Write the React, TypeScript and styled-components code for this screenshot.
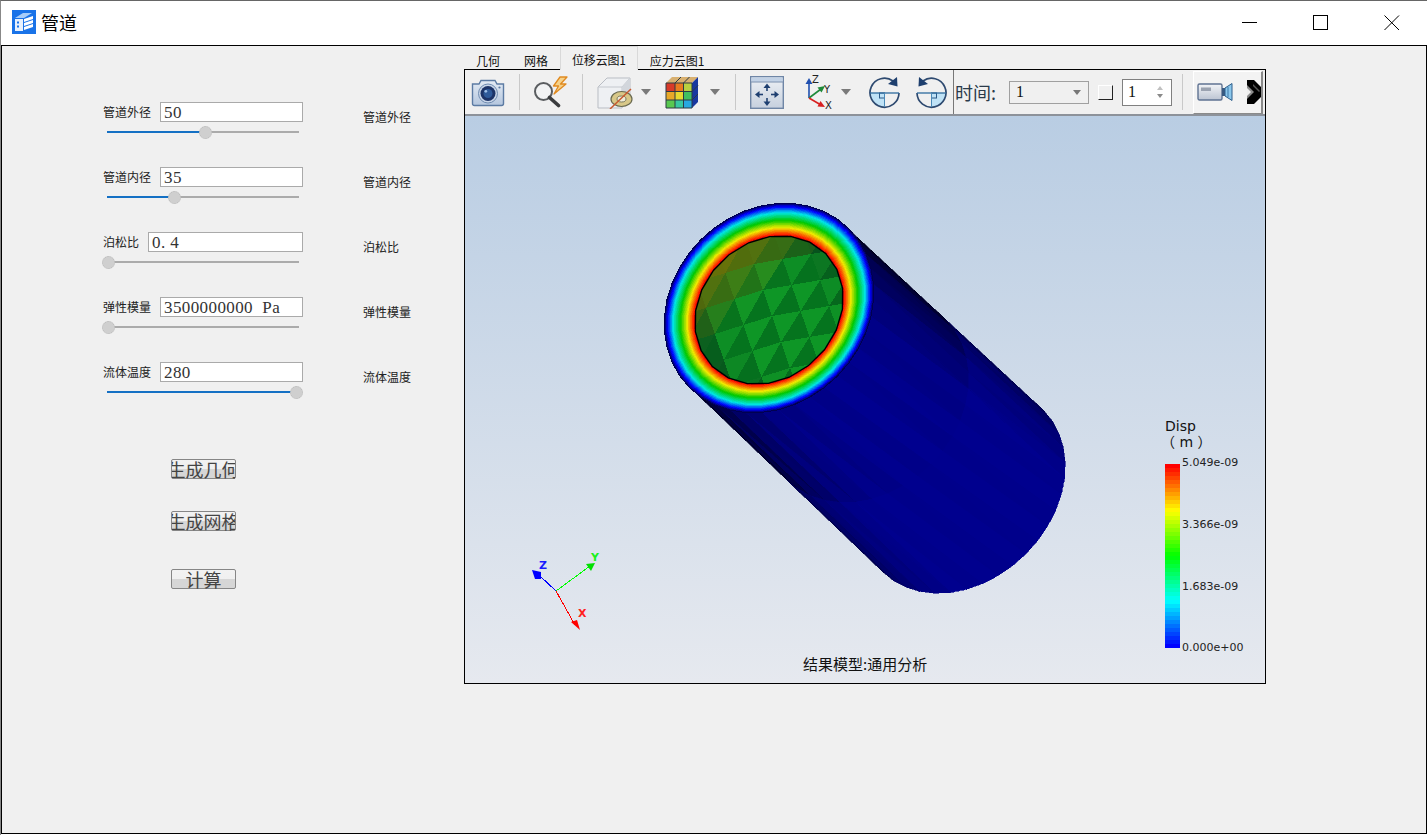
import React from "react";
import styled, {createGlobalStyle} from "styled-components";

const CJK = `"Noto Sans CJK SC", "Liberation Sans", sans-serif`;
const SERIF = `"Liberation Serif", "Noto Sans CJK SC", serif`;

const GlobalStyle = createGlobalStyle`
  html, body {
    margin: 0;
    padding: 0;
    background: #f0f0f0;
    overflow: hidden;
  }
`

interface IField {
    label: string
    value: string
    ratio: number
}

const fields: Array<IField> = [
    {label: "管道外径", value: "50", ratio: 0.516},
    {label: "管道内径", value: "35", ratio: 0.351},
    {label: "泊松比", value: "0. 4", ratio: 0},
    {label: "弹性模量", value: "3500000000  Pa", ratio: 0},
    {label: "流体温度", value: "280", ratio: 1},
];

const tabs = ["几何", "网格", "位移云图1", "应力云图1"];

// ---- colour helpers for the contour plot ----
type RGB = [number, number, number];

const mix = (a: RGB, b: RGB, t: number): RGB => [
    a[0] + (b[0] - a[0]) * t,
    a[1] + (b[1] - a[1]) * t,
    a[2] + (b[2] - a[2]) * t,
];

const css = (c: RGB) => `rgb(${Math.round(c[0])},${Math.round(c[1])},${Math.round(c[2])})`;

const ramp = (t: number, stops: Array<[number, RGB]>): string => {
    for (let i = 1; i < stops.length; i++) {
        if (t <= stops[i][0]) {
            const k = (t - stops[i - 1][0]) / (stops[i][0] - stops[i - 1][0]);
            return css(mix(stops[i - 1][1], stops[i][1], k));
        }
    }
    return css(stops[stops.length - 1][1]);
};

const ringStops: Array<[number, RGB]> = [
    [0, [0, 0, 130]],
    [0.08, [0, 0, 255]],
    [0.26, [0, 230, 230]],
    [0.5, [0, 200, 0]],
    [0.73, [240, 235, 0]],
    [0.95, [255, 20, 0]],
    [1, [170, 0, 0]],
];

const legendStops: Array<[number, RGB]> = [
    [0, [0, 0, 255]],
    [0.25, [0, 255, 255]],
    [0.5, [0, 255, 0]],
    [0.75, [255, 255, 0]],
    [1, [255, 0, 0]],
];

const U = Math.SQRT1_2;
const ellipsePoint = (cx: number, cy: number, a: number, b: number, t: number): [number, number] => [
    cx + a * Math.cos(t) * U + b * Math.sin(t) * U,
    cy - a * Math.cos(t) * U + b * Math.sin(t) * U,
];

const ellipsePoly = (cx: number, cy: number, a: number, b: number, n = 40): string => {
    const pts: Array<string> = [];
    for (let i = 0; i < n; i++) {
        const p = ellipsePoint(cx, cy, a, b, (i / n) * Math.PI * 2);
        pts.push(`${p[0].toFixed(1)},${p[1].toFixed(1)}`);
    }
    return pts.join(" ");
};

const BodyFacets: React.FC = () => {
    const items = [];
    const n = 20;
    for (let i = 0; i < n; i++) {
        const t0 = (i / n) * Math.PI;
        const t1 = ((i + 1) / n) * Math.PI;
        const tm = (t0 + t1) / 2;
        const a0 = ellipsePoint(769, 308, 112, 95, t0);
        const a1 = ellipsePoint(769, 308, 112, 95, t1);
        const b0 = ellipsePoint(963, 491, 114, 89, t0);
        const b1 = ellipsePoint(963, 491, 114, 89, t1);
        const c0 = [(a0[0] + b0[0]) / 2, (a0[1] + b0[1]) / 2];
        const c1 = [(a1[0] + b1[0]) / 2, (a1[1] + b1[1]) / 2];
        const base = Math.sin(tm);
        const lit = 62 + 78 * Math.min(1, Math.pow(base, 0.6) * 1.2);
        const shade = (d: number) => `rgb(0,0,${Math.round(Math.max(0, Math.min(143, lit + d)))})`;
        const odd = i % 2 === 0 ? 4 : -3;
        const near = -58 * (1 - base);
        const tris = [
            [a0, a1, c0, near + odd],
            [a1, c0, c1, near * 0.6 - odd],
            [c0, c1, b0, -odd / 2],
            [c1, b0, b1, odd / 2],
        ] as Array<[number[], number[], number[], number]>;
        tris.forEach((tri, k) => {
            const pts = `${tri[0][0]},${tri[0][1]} ${tri[1][0]},${tri[1][1]} ${tri[2][0]},${tri[2][1]}`;
            items.push(<polygon key={`${i}-${k}`} points={pts} fill={shade(tri[3])} stroke={shade(tri[3])} strokeWidth={0.6}/>);
        });
    }
    return <g>{items}</g>;
};

const BoreFacets: React.FC = () => {
    const items = [];
    const step = 26;
    const cx = 772;
    const cy = 316;
    const project = (i: number, j: number): [number, number] => {
        // rows fan out a little, like the inside of a tube seen at an angle
        const px = i * step * 1.1 + j * 9;
        const py = j * step - i * 7 + Math.abs(i) * 2;
        return [cx + px, cy + py];
    };
    const colour = (x: number, y: number, dark: boolean): string => {
        const d = Math.hypot(x - 785, y - 325) / 88;
        const upper = (790 - (x * 0.72 + y * 0.82)) / 70;
        let c: RGB = dark ? [5, 116, 30] : [14, 150, 38];
        c = mix(c, [8, 70, 28], Math.max(0, Math.min(0.85, (d - 0.62) * 1.7)));
        c = mix(c, [125, 118, 4], Math.max(0, Math.min(0.8, upper)));
        return css(c);
    };
    for (let i = -6; i < 6; i++) {
        for (let j = -6; j < 6; j++) {
            const a = project(i, j);
            const b = project(i + 1, j);
            const c = project(i, j + 1);
            const d = project(i + 1, j + 1);
            items.push(<polygon key={`a${i}${j}`} points={`${a} ${b} ${c}`} fill={colour((a[0] + b[0] + c[0]) / 3, (a[1] + b[1] + c[1]) / 3, false)}/>);
            items.push(<polygon key={`b${i}${j}`} points={`${b} ${c} ${d}`} fill={colour((b[0] + c[0] + d[0]) / 3, (b[1] + c[1] + d[1]) / 3, true)}/>);
        }
    }
    return <g>{items}</g>;
};

const Ring: React.FC = () => {
    const items = [];
    const n = 46;
    for (let i = 0; i < n; i++) {
        const t = i / (n - 1);
        items.push(
            <polygon
                key={i}
                points={ellipsePoly(769, 308 + t * 2, 112 - t * 32, 96 - t * 28)}
                fill={ramp(t, ringStops)}
            />
        );
    }
    return <g>{items}</g>;
};

const LegendBar: React.FC = () => {
    const items = [];
    const n = 46;
    for (let i = 0; i < n; i++) {
        items.push(
            <rect key={i} x={1165} y={464 + i * 4} width={15} height={4} fill={ramp(1 - i / (n - 1), legendStops)}/>
        );
    }
    return <g shapeRendering="crispEdges">{items}</g>;
};

const Scene: React.FC = () => (
    <SceneSvg viewBox="465 116 800 567">
        <defs>
            <clipPath id="bore">
                <polygon points={ellipsePoly(769, 310, 80, 68, 22)}/>
            </clipPath>
        </defs>
        <g shapeRendering="crispEdges">
            <BodyFacets/>
            <polygon points={ellipsePoly(769, 308, 113, 97)} fill="#000050"/>
            <Ring/>
            <g clipPath="url(#bore)">
                <rect x={680} y={230} width={180} height={160} fill="#0a8a20"/>
                <BoreFacets/>
            </g>
        </g>
        <polygon points={ellipsePoly(769, 310, 80, 68, 22)} fill="none" stroke="#000" strokeWidth={1.3}/>

        <g strokeWidth={1} shapeRendering="crispEdges">
            <line x1={556} y1={591} x2={540} y2={576} stroke="#0000ff"/>
            <line x1={556} y1={591} x2={590} y2={566} stroke="#00ff00"/>
            <line x1={556} y1={591} x2={575} y2={625} stroke="#ff0000"/>
        </g>
        <polygon points="532,570 541,572 541,579 535,579" fill="#0000ff"/>
        <polygon points="586,564 595,563 591,571" fill="#00e000"/>
        <polygon points="571,622 577,620 580,630" fill="#ff0000"/>
        <AxisLabel x={539} y={569} fill="#1a1aff">Z</AxisLabel>
        <AxisLabel x={591} y={561} fill="#1cf01c">Y</AxisLabel>
        <AxisLabel x={578} y={617} fill="#ff2020">X</AxisLabel>

        <LegendTitle x={1165} y={431}>Disp</LegendTitle>
        <LegendTitle x={1161} y={447}>（ m ）</LegendTitle>
        <LegendBar/>
        <LegendText x={1182} y={466}>5.049e-09</LegendText>
        <LegendText x={1182} y={528}>3.366e-09</LegendText>
        <LegendText x={1182} y={590}>1.683e-09</LegendText>
        <LegendText x={1182} y={651}>0.000e+00</LegendText>
        <ModelText x={803} y={670}>结果模型:通用分析</ModelText>
    </SceneSvg>
);

// ---- toolbar icons ----
const CameraIcon = () => (
    <svg width="34" height="30" viewBox="0 0 34 30">
        <defs>
            <linearGradient id="camBody" x1="0" y1="0" x2="0" y2="1">
                <stop offset="0" stopColor="#e4ebf4"/>
                <stop offset="1" stopColor="#b4c6de"/>
            </linearGradient>
        </defs>
        <path d="M1.5 7 H8 L10 3.5 H24 L26 7 H32.5 V26.5 Q32.5 28.5 30.5 28.5 H3.5 Q1.5 28.5 1.5 26.5 Z" fill="url(#camBody)" stroke="#5c7ba3" strokeWidth="1.4"/>
        <circle cx="17" cy="16.5" r="9.5" fill="#c9d6e8" stroke="#6f8bb0"/>
        <circle cx="17" cy="16.5" r="7.5" fill="#1d3468"/>
        <circle cx="17" cy="16.5" r="4.5" fill="#2e5a9a"/>
        <circle cx="14.8" cy="14.3" r="1.4" fill="#9fc0e8"/>
        <circle cx="28.5" cy="10.5" r="1.1" fill="#5c7ba3"/>
    </svg>
);

const QuickZoomIcon = () => (
    <svg width="37" height="32" viewBox="0 0 37 32">
        <circle cx="10.5" cy="15.5" r="8.5" fill="#f2f3f4" stroke="#5a5d60" strokeWidth="2"/>
        <line x1="16.5" y1="21.5" x2="25.5" y2="29.5" stroke="#3a3c3e" strokeWidth="3.6" strokeLinecap="round"/>
        <path d="M27 1 L20.5 10 L25.5 10 L21 18 L33 8 L27.5 8 L34 1 Z" fill="#f6d28a" stroke="#e08a20" strokeWidth="1.3" strokeLinejoin="round"/>
    </svg>
);

const HideCubeIcon = () => (
    <svg width="36" height="33" viewBox="0 0 36 33">
        <path d="M1 11 L10 2 H33 V24 L25 32 H1 Z" fill="#eef0f3" stroke="#b9bdc4"/>
        <path d="M1 11 H25 V32 M25 11 L33 2" fill="none" stroke="#c4c8ce"/>
        <path d="M25 11 L33 2 V24 L25 32 Z" fill="#d2d6dc"/>
        <ellipse cx="24.5" cy="23" rx="10.5" ry="7.5" fill="#d8c888" stroke="#6a6a50" strokeWidth="1.2"/>
        <ellipse cx="24.5" cy="23" rx="4.5" ry="3" fill="#f0ecd8" stroke="#7a7a60"/>
        <line x1="13" y1="33" x2="34" y2="13" stroke="#c85a30" strokeWidth="1.5"/>
    </svg>
);

const ColorCubeIcon = () => (
    <svg width="35" height="33" viewBox="0 0 35 33">
        <path d="M1 7 L7 1 H33 L27 7 Z" fill="#d8b070"/>
        <path d="M27 7 L33 1 V26 L27 32 Z" fill="#1838a0"/>
        <rect x="1" y="7" width="9" height="8.5" fill="#d83a28"/>
        <rect x="10" y="7" width="8.5" height="8.5" fill="#e87a20"/>
        <rect x="18.5" y="7" width="8.5" height="8.5" fill="#b8d040"/>
        <rect x="1" y="15.5" width="9" height="8.5" fill="#e8a828"/>
        <rect x="10" y="15.5" width="8.5" height="8.5" fill="#e8d830"/>
        <rect x="18.5" y="15.5" width="8.5" height="8.5" fill="#40c060"/>
        <rect x="1" y="24" width="9" height="8" fill="#58c850"/>
        <rect x="10" y="24" width="8.5" height="8" fill="#38c8a0"/>
        <rect x="18.5" y="24" width="8.5" height="8" fill="#28a8e0"/>
        <path d="M1 7 H27 V32 H1 Z M10 7 V32 M18.5 7 V32 M1 15.5 H27 M1 24 H27 M10 7 L16 1 M18.5 7 L24.5 1 M27 15.5 L33 9.5 M27 24 L33 18" stroke="#2c3a44" strokeWidth="1" fill="none"/>
    </svg>
);

const FitViewIcon = () => (
    <svg width="34" height="33" viewBox="0 0 34 33">
        <defs>
            <linearGradient id="fitBody" x1="0" y1="0" x2="0" y2="1">
                <stop offset="0" stopColor="#eef1f5"/>
                <stop offset="1" stopColor="#c6d0de"/>
            </linearGradient>
        </defs>
        <rect x="0.7" y="0.7" width="32.6" height="31.6" fill="url(#fitBody)" stroke="#6f86a6" strokeWidth="1.4"/>
        <rect x="1.4" y="1.4" width="31.2" height="4.5" fill="#c2d2e6"/>
        <line x1="1" y1="6" x2="33" y2="6" stroke="#7a90ae"/>
        <g stroke="#1e3f70" strokeWidth="1.6" fill="#1e3f70">
            <path d="M17 15 V11" fill="none"/>
            <path d="M17 7.5 L13.5 12 H20.5 Z" stroke="none"/>
            <path d="M17 22 V26" fill="none"/>
            <path d="M17 30 L13.5 25.5 H20.5 Z" stroke="none"/>
            <path d="M13 18.5 H9" fill="none"/>
            <path d="M5 18.5 L9.5 15 V22 Z" stroke="none"/>
            <path d="M21 18.5 H25" fill="none"/>
            <path d="M29 18.5 L24.5 15 V22 Z" stroke="none"/>
        </g>
    </svg>
);

const AxesIcon = () => (
    <svg width="34" height="36" viewBox="0 0 34 36">
        <line x1="7" y1="24" x2="7" y2="8" stroke="#2050b0" strokeWidth="1.6"/>
        <path d="M7 4 L3.5 10 H10.5 Z" fill="#2050b0"/>
        <line x1="7" y1="24" x2="19" y2="15" stroke="#1f8a3a" strokeWidth="1.6"/>
        <path d="M23 12 L15.5 13.5 L19.5 18.5 Z" fill="#1f8a3a"/>
        <line x1="7" y1="24" x2="19" y2="31" stroke="#d82020" strokeWidth="1.6"/>
        <path d="M23 33 L15.5 32.5 L18.5 27 Z" fill="#d82020"/>
        <AxisIconLabel x={10} y={9}>Z</AxisIconLabel>
        <AxisIconLabel x={22} y={19}>Y</AxisIconLabel>
        <AxisIconLabel x={23} y={35}>X</AxisIconLabel>
    </svg>
);

// the clockwise one shades its lower left quarter, the other one is its mirror
const RotateIcon: React.FC<{flip?: boolean}> = ({flip}) => (
    <svg width="33" height="33" viewBox="0 0 33 33">
        <g transform={flip ? "translate(33 0) scale(-1 1)" : undefined}>
            <path d="M16.5 17 H2 A14.5 14.5 0 0 0 16.5 31.5 Z" fill="#bfe2f6"/>
            <rect x="11.5" y="17" width="5" height="5" fill="none" stroke="#2c5a88"/>
            <path d="M25 5 A14.5 14.5 0 1 0 31 17" fill="none" stroke="#2e4a70" strokeWidth="1.7"/>
            <line x1="2" y1="17" x2="31" y2="17" stroke="#2c6a9c" strokeWidth="1.3"/>
            <line x1="16.5" y1="17" x2="16.5" y2="31" stroke="#4a8ab8"/>
            <path d="M29 1 L29.5 10.5 L20 8 Z" fill="#1e3f6e"/>
        </g>
    </svg>
);

const VideoIcon = () => (
    <svg width="36" height="20" viewBox="0 0 36 20">
        <defs>
            <linearGradient id="videoBody" x1="0" y1="0" x2="0" y2="1">
                <stop offset="0" stopColor="#f2f4f7"/>
                <stop offset="1" stopColor="#bcc4d2"/>
            </linearGradient>
        </defs>
        <rect x="1" y="2" width="24" height="16" rx="1.5" fill="url(#videoBody)" stroke="#5f7392" strokeWidth="1.4"/>
        <rect x="4" y="5.5" width="10" height="3.5" fill="#9aa2b0"/>
        <path d="M25 6 L28 6 L28 14 L25 14 Z" fill="#3a5a80"/>
        <path d="M28 6 L35 1.5 V18.5 L28 14 Z" fill="#8cc8ec" stroke="#2f5f8c"/>
        <path d="M31 5 V15" stroke="#3f78a8"/>
    </svg>
);

const MoreIcon = () => (
    <svg width="14" height="24" viewBox="0 0 14 24">
        <path d="M0 0 H7 L14 7 V17 L7 24 H0 Z" fill="#000"/>
        <path d="M0 5 L7 12 L0 19 Z" fill="#8a8a8a"/>
        <path d="M0 8 L4 12 L0 16 Z" fill="#efefef"/>
        <path d="M6 4 L13 11 L12 12 L6 6 Z" fill="#555"/>
    </svg>
);

const App: React.FC = () => {
    return (
        <Window>
            <GlobalStyle/>
            <TitleBar>
                <AppLogo viewBox="0 0 24 24">
                    <rect width="24" height="24" fill="#1a73e8"/>
                    <path d="M3 8 L11 3 L20 3 L12 8 Z" fill="#a9cdf8"/>
                    <path d="M3 9 H11 V21 H3 Z" fill="#e8f1fd"/>
                    <path d="M12 9 L21 6 V9 L12 12 Z M12 13 L21 10 V13 L12 16 Z M12 17 L21 14 V17 L12 20 Z" fill="#fff"/>
                    <path d="M5 11.5 H7 V13.5 H5 Z M5 15.5 H7 V17.5 H5 Z" fill="#1a73e8"/>
                </AppLogo>
                <AppTitle>管道</AppTitle>
                <WindowControls>
                    <ControlIcon viewBox="0 0 16 16"><line x1="0" y1="7.5" x2="15" y2="7.5" stroke="#000"/></ControlIcon>
                    <ControlIcon viewBox="0 0 16 16"><rect x="0.5" y="0.5" width="14" height="14" fill="none" stroke="#000"/></ControlIcon>
                    <ControlIcon viewBox="0 0 16 16"><path d="M0.5 0.5 L15 15 M15 0.5 L0.5 15" stroke="#000" fill="none"/></ControlIcon>
                </WindowControls>
            </TitleBar>
            <Body>
                <LeftPanel>
                    {fields.map(field => (
                        <FieldRow key={field.label}>
                            <FieldMain>
                                <InputLine>
                                    <FieldLabel>{field.label}</FieldLabel>
                                    <ValueInput>{field.value}</ValueInput>
                                </InputLine>
                                <Slider>
                                    <SliderFill $ratio={field.ratio}/>
                                    <SliderThumb $ratio={field.ratio}/>
                                </Slider>
                            </FieldMain>
                            <SideLabel>{field.label}</SideLabel>
                        </FieldRow>
                    ))}
                    <ActionButton $top={32}>生成几何</ActionButton>
                    <ActionButton $top={32}>生成网格</ActionButton>
                    <ActionButton $top={38}>计算</ActionButton>
                </LeftPanel>
                <ViewerPanel>
                    <TabBar>
                        {tabs.map((tab, i) => (
                            <Tab key={tab} $active={i === 2}>{tab}</Tab>
                        ))}
                    </TabBar>
                    <ViewerFrame>
                        <Toolbar>
                            <ToolSlot $left={6}><CameraIcon/></ToolSlot>
                            <ToolSep $left={14}/>
                            <ToolSlot $left={13}><QuickZoomIcon/></ToolSlot>
                            <ToolSep $left={12}/>
                            <ToolSlot $left={14}><HideCubeIcon/></ToolSlot>
                            <Caret $left={8}/>
                            <ToolSlot $left={14}><ColorCubeIcon/></ToolSlot>
                            <Caret $left={10}/>
                            <ToolSep $left={15}/>
                            <ToolSlot $left={14}><FitViewIcon/></ToolSlot>
                            <ToolSlot $left={18}><AxesIcon/></ToolSlot>
                            <Caret $left={5}/>
                            <ToolSlot $left={17}><RotateIcon/></ToolSlot>
                            <ToolSlot $left={14}><RotateIcon flip/></ToolSlot>
                            <DarkSep $left={5}/>
                            <TimeLabel>时间:</TimeLabel>
                            <TimeCombo>1<ComboArrow/></TimeCombo>
                            <TimeCheck/>
                            <TimeSpin>
                                1
                                <SpinArrows>
                                    <SpinUp/>
                                    <SpinDown/>
                                </SpinArrows>
                            </TimeSpin>
                            <ToolSep $left={10}/>
                            <RecordButton>
                                <VideoIcon/>
                                <MoreSlot><MoreIcon/></MoreSlot>
                            </RecordButton>
                        </Toolbar>
                        <Canvas>
                            <Scene/>
                        </Canvas>
                    </ViewerFrame>
                </ViewerPanel>
            </Body>
        </Window>
    );
}

const Window = styled.div`
  width: 1427px;
  height: 835px;
  box-sizing: border-box;
  display: flex;
  flex-direction: column;
  border-top: 1px solid #666;
  border-left: 1px solid #888;
  background: #fff;
  font-family: ${CJK};
  overflow: hidden;
`

const TitleBar = styled.div`
  height: 44px;
  flex: none;
  display: flex;
  align-items: center;
  padding-left: 11px;
  background: #fff;
`

const AppLogo = styled.svg`
  width: 24px;
  height: 24px;
  margin-bottom: 2px;
`

const AppTitle = styled.span`
  margin-left: 5px;
  margin-bottom: 3px;
  font-size: 18px;
  color: #000;
`

const WindowControls = styled.div`
  margin-left: auto;
  display: flex;
  align-items: center;
  padding-right: 27px;
  gap: 55px;
  margin-bottom: 1px;
`

const ControlIcon = styled.svg`
  width: 16px;
  height: 16px;
`

const Body = styled.div`
  flex: 1;
  display: flex;
  min-height: 0;
  margin-bottom: 1px;
  box-sizing: border-box;
  border: 1px solid #000;
  background: #f0f0f0;
`

const LeftPanel = styled.div`
  width: 462px;
  flex: none;
  box-sizing: border-box;
  padding: 56px 0 0 100px;
`

const FieldRow = styled.div`
  height: 65px;
  display: grid;
  grid-template-columns: 201px auto;
  column-gap: 60px;
`

const FieldMain = styled.div`
  display: flex;
  flex-direction: column;
`

const InputLine = styled.div`
  display: flex;
  align-items: center;
  gap: 9px;
  height: 20px;
  padding-left: 1px;
`

const FieldLabel = styled.span`
  font-size: 12px;
  line-height: 20px;
  color: #222;
  white-space: nowrap;
`

const ValueInput = styled.div`
  flex: 1;
  height: 20px;
  box-sizing: border-box;
  padding-left: 3px;
  background: #fff;
  border: 1px solid #aaa;
  font-family: ${SERIF};
  font-size: 17px;
  letter-spacing: 0.4px;
  line-height: 20px;
  color: #333;
  white-space: pre;
  overflow: hidden;
`

const Slider = styled.div`
  position: relative;
  margin: 9px 0 0 5px;
  width: 192px;
  height: 2px;
  background: #ababab;
`

const SliderFill = styled.div<{$ratio: number}>`
  height: 2px;
  width: ${props => props.$ratio * 188 + 1}px;
  background: #1470c4;
`

const SliderThumb = styled.div<{$ratio: number}>`
  position: absolute;
  top: -5px;
  left: ${props => props.$ratio * 188 - 5}px;
  width: 11px;
  height: 11px;
  border-radius: 50%;
  background: #cfcfcf;
  border: 1px dotted #b8b8b8;
`

const SideLabel = styled.span`
  font-size: 12px;
  line-height: 20px;
  margin-top: 5px;
  height: 20px;
  color: #222;
`

const ActionButton = styled.div<{$top: number}>`
  width: 65px;
  height: 20px;
  box-sizing: border-box;
  margin: ${props => props.$top}px 0 0 69px;
  display: flex;
  justify-content: center;
  overflow-x: clip;
  overflow-y: visible;
  border: 1px solid #868686;
  border-radius: 2px;
  background: linear-gradient(#f2f2f2 0%, #f0f0f0 50%, #d6d6d6 50%, #d6d6d6 100%);
  font-size: 18px;
  line-height: 18px;
  color: #444;
  white-space: nowrap;
`

const ViewerPanel = styled.div`
  flex: none;
  width: 802px;
  display: flex;
  flex-direction: column;
`

const TabBar = styled.div`
  height: 23px;
  display: flex;
  align-items: flex-end;
  position: relative;
  z-index: 1;
`

const Tab = styled.div<{$active: boolean}>`
  box-sizing: border-box;
  padding: 4px 11px 0;
  margin-bottom: ${props => props.$active ? "-1px" : "0"};
  font-size: 12px;
  letter-spacing: ${props => props.$active ? "-0.2px" : "0"};
  line-height: 18px;
  color: #111;
  background: #f0f0f0;
  border: 1px solid ${props => props.$active ? "#d9d9d9" : "transparent"};
  border-bottom: ${props => props.$active ? "1px solid #f0f0f0" : "none"};
  height: ${props => props.$active ? "24px" : "22px"};
`

const ViewerFrame = styled.div`
  height: 615px;
  box-sizing: border-box;
  border: 1px solid #000;
  display: flex;
  flex-direction: column;
`

const Toolbar = styled.div`
  height: 46px;
  flex: none;
  box-sizing: border-box;
  display: flex;
  align-items: center;
  background: #f0f0f0;
  border-bottom: 2px solid #8d929a;
`

const ToolSlot = styled.div<{$left: number}>`
  margin-left: ${props => props.$left}px;
  display: flex;
  align-items: center;
`

const ToolSep = styled.div<{$left: number}>`
  margin-left: ${props => props.$left}px;
  width: 1px;
  height: 36px;
  background: #c9c9c9;
`

const DarkSep = styled.div<{$left: number}>`
  margin-left: ${props => props.$left}px;
  width: 1px;
  height: 44px;
  background: #777;
`

const Caret = styled.div<{$left: number}>`
  margin-left: ${props => props.$left}px;
  width: 0;
  height: 0;
  border-left: 5.5px solid transparent;
  border-right: 5.5px solid transparent;
  border-top: 6px solid #7a7a7a;
`

const TimeLabel = styled.span`
  margin-left: 1px;
  width: 54px;
  font-size: 18px;
  color: #2a3a4a;
  white-space: nowrap;
`

const TimeCombo = styled.div`
  width: 80px;
  height: 23px;
  box-sizing: border-box;
  padding-left: 6px;
  display: flex;
  align-items: center;
  justify-content: space-between;
  border: 1px solid #a0a0a0;
  font-family: ${SERIF};
  font-size: 16px;
  color: #111;
`

const ComboArrow = styled.div`
  margin-right: 7px;
  width: 0;
  height: 0;
  border-left: 4px solid transparent;
  border-right: 4px solid transparent;
  border-top: 5px solid #777;
`

const TimeCheck = styled.div`
  margin-left: 9px;
  width: 15px;
  height: 15px;
  box-sizing: border-box;
  border-right: 1px solid #222;
  border-bottom: 1px solid #222;
  border-left: 1px solid #fff;
  border-top: 1px solid #fff;
`

const TimeSpin = styled.div`
  margin-left: 9px;
  width: 50px;
  height: 27px;
  box-sizing: border-box;
  padding-left: 5px;
  display: flex;
  align-items: center;
  justify-content: space-between;
  border: 1px solid #808080;
  background: #fff;
  font-family: ${SERIF};
  font-size: 16px;
  color: #111;
`

const SpinArrows = styled.div`
  display: flex;
  flex-direction: column;
  gap: 4px;
  margin-right: 8px;
`

const SpinUp = styled.div`
  width: 0;
  height: 0;
  border-left: 3px solid transparent;
  border-right: 3px solid transparent;
  border-bottom: 4px solid #c0c0c0;
`

const SpinDown = styled.div`
  width: 0;
  height: 0;
  border-left: 3px solid transparent;
  border-right: 3px solid transparent;
  border-top: 4px solid #8a8a8a;
`

const RecordButton = styled.div`
  margin-left: 10px;
  width: 70px;
  height: 43px;
  box-sizing: border-box;
  padding-left: 3px;
  display: flex;
  align-items: center;
  background: #f3f3f3;
  border-top: 1px solid #fff;
  border-left: 1px solid #fff;
  border-right: 2px solid #8a8a8a;
  border-bottom: 1px solid #8a8a8a;
`

const MoreSlot = styled.div`
  margin-left: 14px;
  display: flex;
`

const Canvas = styled.div`
  flex: 1;
  min-height: 0;
  background: linear-gradient(#b9cde3, #e6e9ef);
`

const SceneSvg = styled.svg`
  display: block;
  width: 800px;
  height: 567px;
`

const AxisLabel = styled.text`
  font-family: "DejaVu Sans", sans-serif;
  font-size: 11px;
  font-weight: 700;
`

const AxisIconLabel = styled.text`
  font-family: "DejaVu Sans", sans-serif;
  font-size: 10px;
  fill: #222;
`

const LegendTitle = styled.text`
  font-family: "DejaVu Sans", "Noto Sans CJK SC", sans-serif;
  font-size: 14px;
  fill: #111;
`

const LegendText = styled.text`
  font-family: "DejaVu Sans", sans-serif;
  font-size: 11px;
  fill: #222;
`

const ModelText = styled.text`
  font-family: ${CJK};
  font-size: 15px;
  fill: #111;
`

export default App;
